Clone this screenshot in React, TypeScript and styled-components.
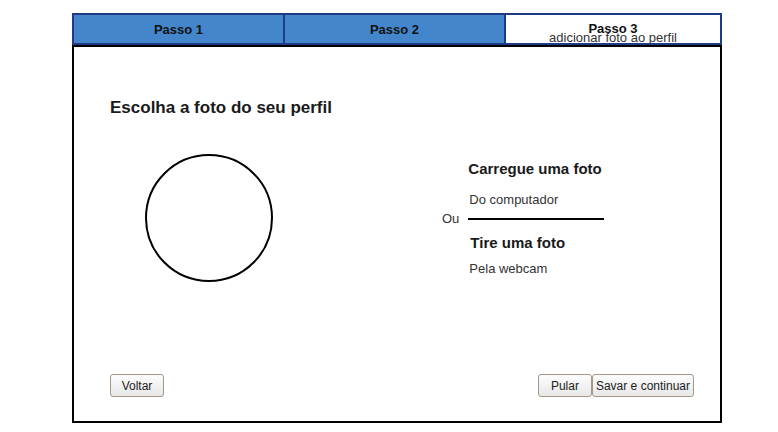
import React, {FC} from "react";
import styled, {createGlobalStyle, css} from "styled-components";

const GlobalStyle = createGlobalStyle`
  html, body {
    margin: 0;
    padding: 0;
    background: #fff;
  }
  body {
    font-family: "Liberation Sans", Arial, sans-serif;
    color: #222;
  }
`

interface StepItem {
    label: string
    hint?: string
    width: number
    active?: boolean
}

const steps: StepItem[] = [
    {label: "Passo 1", width: 209},
    {label: "Passo 2", width: 221},
    {label: "Passo 3", hint: "adicionar foto ao perfil", width: 216, active: true},
]

const App: FC = () => {
    return (
        <>
            <GlobalStyle/>
            <Page>
                <Wizard>
                    <StepBar>
                        {steps.map((s, i) => (
                            <Step key={s.label} $active={!!s.active} $first={i === 0} $width={s.width}>
                                <StepLabel>{s.label}</StepLabel>
                                {s.hint && <StepHint>{s.hint}</StepHint>}
                            </Step>
                        ))}
                    </StepBar>
                    <Panel>
                        <Heading>Escolha a foto do seu perfil</Heading>
                        <Body>
                            <Avatar/>
                            <Choices>
                                <OptionTitle>Carregue uma foto</OptionTitle>
                                <OptionHint>Do computador</OptionHint>
                                <Or>Ou</Or>
                                <Divider/>
                                <OptionTitle $indent={2} $gap={7.7}>Tire uma foto</OptionTitle>
                                <OptionHint $gap={10}>Pela webcam</OptionHint>
                            </Choices>
                        </Body>
                        <Footer>
                            <Button>Voltar</Button>
                            <ButtonGroup>
                                <Button>Pular</Button>
                                <Button $tight>Savar e continuar</Button>
                            </ButtonGroup>
                        </Footer>
                    </Panel>
                </Wizard>
            </Page>
        </>
    )
}

const Page = styled.div`
  padding: 13px 0 0 72px;
`
const Wizard = styled.div`
  width: 650px;
`
const StepBar = styled.div`
  display: flex;
  height: 32px;
  box-sizing: border-box;
  border: 2px solid #1f3a86;
  overflow: hidden;
`
const Step = styled.div<{$active: boolean, $first: boolean, $width: number}>`
  width: ${({$width}) => $width}px;
  box-sizing: border-box;
  display: flex;
  flex-direction: column;
  align-items: center;
  justify-content: center;
  background: #4486cb;
  color: #111;
  ${({$first}) => !$first && css`
    border-left: 2px solid #1f3a86;
  `}
  ${({$active}) => $active && css`
    background: #fff;
  `}
`
const StepLabel = styled.span`
  font-size: 13px;
  font-weight: bold;
  line-height: 15px;
`
const StepHint = styled.span`
  font-size: 13px;
  line-height: 15px;
  color: #333;
  margin: -6.4px 0 -8.6px;
  white-space: nowrap;
`
const Panel = styled.div`
  height: 378px;
  box-sizing: border-box;
  border: 2px solid #000;
  display: flex;
  flex-direction: column;
`
const Heading = styled.h1`
  margin: 51px 0 0 36px;
  font-size: 17px;
  line-height: 20px;
  font-weight: bold;
  color: #1a1a1a;
`
const Body = styled.div`
  display: flex;
  align-items: flex-start;
  padding-left: 71px;
  margin-top: 36px;
`
const Avatar = styled.div`
  width: 128px;
  height: 128px;
  box-sizing: border-box;
  border: 2px solid #000;
  border-radius: 50%;
`
const Choices = styled.div`
  display: grid;
  grid-template-columns: auto 136px;
  column-gap: 9px;
  margin: 6px 0 0 169px;
`
const OptionTitle = styled.div<{$indent?: number, $gap?: number}>`
  grid-column: 2;
  margin-top: ${({$gap}) => $gap ?? 0}px;
  margin-left: ${({$indent}) => $indent ?? 0}px;
  font-size: 15px;
  line-height: 17px;
  font-weight: bold;
  color: #1a1a1a;
  white-space: nowrap;
`
const OptionHint = styled.div<{$gap?: number}>`
  grid-column: 2;
  margin-top: ${({$gap}) => $gap ?? 14.6}px;
  margin-left: 1px;
  font-size: 13px;
  line-height: 15px;
  color: #333;
  white-space: nowrap;
`
const Or = styled.div`
  grid-row: 3;
  grid-column: 1;
  margin-top: 4.7px;
  font-size: 13px;
  line-height: 15px;
  color: #333;
`
const Divider = styled.div`
  grid-row: 3;
  grid-column: 2;
  margin-top: 4.7px;
  height: 15px;
  display: flex;
  align-items: center;
  &::before {
    content: "";
    flex: 1;
    height: 2px;
    background: #000;
  }
`
const Footer = styled.div`
  margin-top: auto;
  display: flex;
  justify-content: space-between;
  padding: 0 26px 24px 36px;
`
const ButtonGroup = styled.div`
  display: flex;
`
const Button = styled.button<{$tight?: boolean}>`
  height: 23px;
  min-width: ${({$tight}) => $tight ? 0 : 54}px;
  padding: 0 ${({$tight}) => $tight ? 3 : 8}px;
  box-sizing: border-box;
  border: 1px solid #a39886;
  border-radius: 3px;
  background: linear-gradient(#fdfdfd, #e7e7e7);
  font-family: "Liberation Sans", Arial, sans-serif;
  font-size: 12px;
  color: #222;
  cursor: pointer;
`

export default App
